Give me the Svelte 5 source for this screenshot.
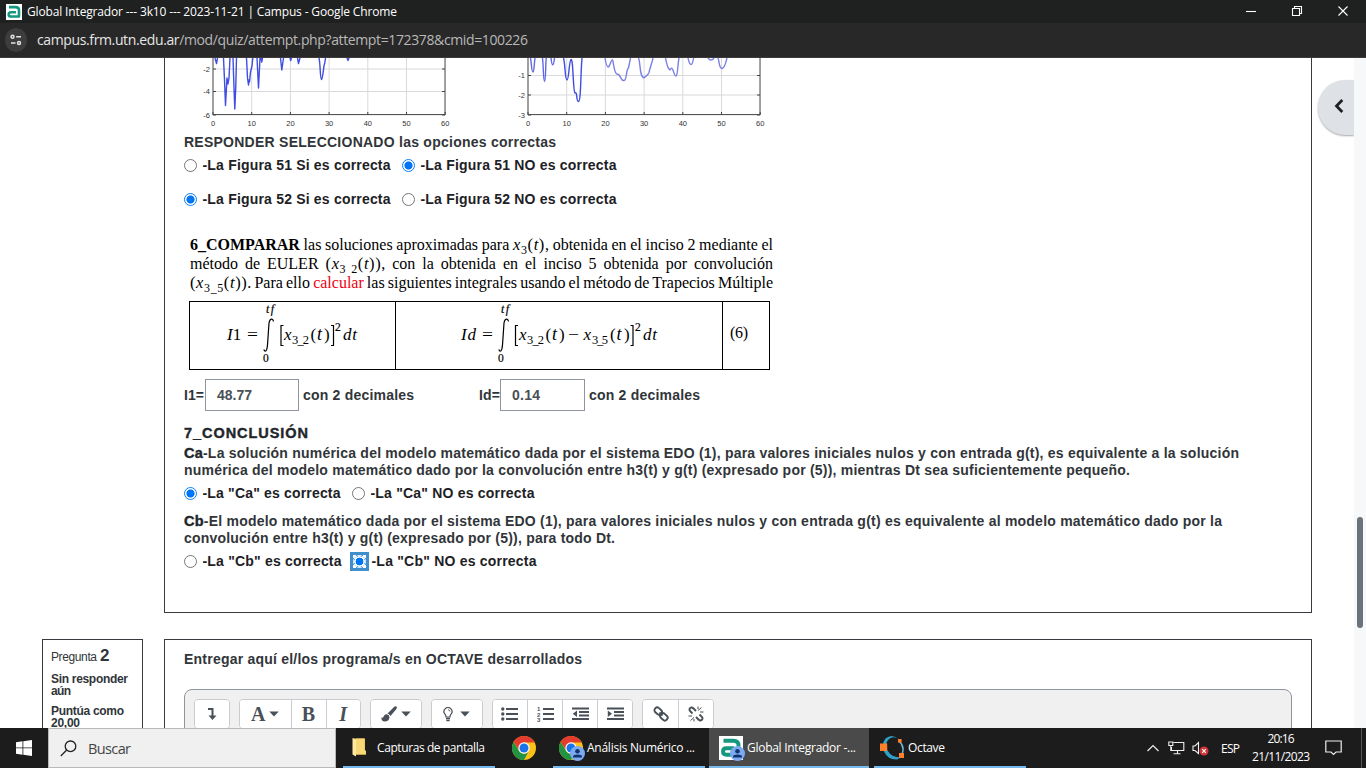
<script>
  // Spreads a line of text to a given width with letter or word spacing.
  function fit(node, opts) {
    const { w, words = false } = typeof opts === 'number' ? { w: opts } : opts;
    const natural = node.getBoundingClientRect().width;
    const text = node.textContent.trim();
    if (words) {
      const gaps = text.split(/\s+/).length - 1;
      node.style.wordSpacing = `${(w - natural) / gaps}px`;
    } else {
      const step = (w - natural) / (text.length - 1);
      node.style.letterSpacing = `${step}px`;
      node.style.marginRight = `${-step}px`;
    }
  }

  const ticks = [0, 10, 20, 30, 40, 50, 60];
  const leftY = [['-2', 11], ['-4', 33.5], ['-6', 57]];
  const rightY = [['-1', 17.5], ['-2', 37], ['-3', 57]];
</script>

{#snippet radio(on, focus = false)}
  <span class="radio" class:on class:focus></span>
{/snippet}

{#snippet logo(size)}
  <svg width={size} height={size} viewBox="0 0 24 24">
    <rect width="24" height="24" fill="#fff" />
    <path d="M4.500 4.700H14.500Q19.500 4.700 19.500 9.500V18.800H7.500Q4 18.800 4 15.600Q4 12.300 7.500 12.300H15" fill="none" stroke="#16977f" stroke-width="3.900" stroke-linejoin="round" />
  </svg>
{/snippet}

{#snippet chrome()}
  <svg width="24" height="24" viewBox="0 0 24 24">
    <circle cx="12" cy="12" r="12" fill="#fbc116" />
    <path d="M1.6 6A12 12 0 0 1 22.7 6.6H12L7 14Z" fill="#e33b2e" />
    <path d="M1.6 6L7.2 15A5.6 5.6 0 0 0 16.8 15L12 24A12 12 0 0 1 1.6 6Z" fill="#229342" />
    <circle cx="12" cy="12" r="5.7" fill="#fff" />
    <circle cx="12" cy="12" r="4.5" fill="#1a73e8" />
  </svg>
{/snippet}

{#snippet person()}
  <svg class="person" width="15" height="15" viewBox="0 0 15 15">
    <circle cx="7.5" cy="7.5" r="7.5" fill="#7baaf0" />
    <circle cx="7.5" cy="5.2" r="2.3" fill="#12336b" />
    <path d="M3 11.5V10.3Q3.5 8.4 7.5 8.4T12 10.3V11.5Z" fill="#12336b" />
  </svg>
{/snippet}

{#snippet caret()}
  <svg width="10" height="6" viewBox="0 0 10 6"><path d="M0.3 0.5H9.7L5 5.5Z" fill="#495057" /></svg>
{/snippet}

{#snippet plotFrame(x0, y)}
  <g stroke="#d9d9d9" fill="none">
    {#each ticks as t}<path d="M{x0 + t * 3.87} 0V57" />{/each}
    {#each y as row}<path d="M{x0} {row[1]}H{x0 + 232}" />{/each}
  </g>
  <path d="M{x0} 0V56.5H{x0 + 232}V0" fill="none" stroke="#555" />
  <g stroke="#444">
    {#each ticks as t}<path d="M{x0 + t * 3.87} 57v-3" />{/each}
    {#each y as row}<path d="M{x0} {row[1]}h3M{x0 + 232} {row[1]}h-3" />{/each}
  </g>
  <g class="ticktext">
    {#each ticks as t}<text x={x0 + t * 3.87} y="68" text-anchor="middle">{t}</text>{/each}
    {#each y as row}<text x={x0 - 3} y={row[1] + 2.5} text-anchor="end">{row[0]}</text>{/each}
  </g>
{/snippet}

<div class="screen">
  <header class="title">
    {@render logo(16)}
    <span use:fit={370}>Global Integrador --- 3k10 --- 2023-11-21 | Campus - Google Chrome</span>
    <svg class="controls" width="116" height="23" viewBox="0 0 116 23" fill="none" stroke="#fff" stroke-width="1.1">
      <path d="M6 11.5H16" />
      <path d="M52.5 8.5h7v7h-7zM54.5 8.5v-2h7v7h-2" />
      <path d="M98.5 6.500l9 9M107.500 6.500l-9 9" />
    </svg>
  </header>
  <div class="address">
    <span class="tune">
      <svg width="12" height="12" viewBox="0 0 12 12" fill="none" stroke="#e6e6e6" stroke-width="1.4">
        <circle cx="2.500" cy="2.800" r="1.500" /><path d="M6.200 2.800H11M1 9H5.500" /><circle cx="9" cy="9" r="1.500" />
      </svg>
    </span>
    <span class="url" use:fit={491}>campus.frm.utn.edu.ar<i>/mod/quiz/attempt.php?attempt=172378&amp;cmid=100226</i></span>
  </div>

  <main>
    <div class="content">
      <section class="card first">
        <svg class="plots" width="600" height="72" viewBox="0 0 600 72">
          {@render plotFrame(28, leftY)}
          {@render plotFrame(343, rightY)}
          <g fill="none" stroke="#3f4de0" stroke-width="1.4" stroke-linejoin="round">
            <path d="M30 0L31.500 5.500L32.500 0M38.500 0L39.500 22L40.500 47.500L42 20L43 26L44 20L45 0M48 0L49 30L49.800 51L50.800 28L51.500 0M61.500 0L62.500 20L63.500 27L64 22L64.500 24L65.500 14L67 8L67.800 0M72 0L73.500 30L75 0M76 0L76.800 4L77.500 0M95.500 0L96.800 12L98.500 0M105 0L105.700 2.500L106.500 0M112.500 0L113.500 5.500L115 0M134 0C135.500 6 135 21 136.500 21.500C138 21 138.500 7 139.800 5L140.500 0M162 0L163 2.500L164 0" />
            <path d="M345.500 0C346.500 5 346.500 14 348 14C349.300 14 349.200 4 350 0M357.500 0C358.500 8 358.300 23.500 359.500 23.500C360.800 23.500 360.500 8 361.200 0M366 0C367 9 368.500 9 369.500 0" stroke="#5f68e0" />
            <path d="M378.500 0C380.500 7 379.800 22 382 22C384 22 384 3 386 1.500C388.300 0 388 34 390 35C392.500 33 391 43.500 393.500 43.500C396 43.500 395.500 17 397 0" />
            <path d="M420 0C421 6 422 9 423 9C425 9 425.500 3 427 2C428.500 0 428.500 15 432 16C436 16 435.500 23.500 439 22.500C442 22.500 441 11 443.500 10L445.500 0M453.500 0C455.500 4 454.500 19.500 459 19.800C462 17 462.500 18 464 14.500C465.500 8 467 5 468 0M480.500 0C482 8 483 11 485 12C486.500 9 487 10 488 12C489 15 489.500 18 491 18C493 17 492.500 7 494 0M503 0C504 4 504.500 6.500 506 6.500S508 4 508.500 0M523 0Q526 4 529 0M533 0C534.500 4 534 10.500 537 10.500C540 10 540.500 5 542 0" stroke="#7b81e2" />
          </g>
        </svg>
        <p class="ask"><span use:fit={372}>RESPONDER SELECCIONADO las opciones correctas</span></p>
        <div class="options">
          <label>{@render radio(false)}<span use:fit={188}>-La Figura 51 Si es correcta</span></label>
          <label>{@render radio(true)}<span use:fit={196}>-La Figura 51 NO es correcta</span></label>
        </div>
        <div class="options second">
          <label>{@render radio(true)}<span use:fit={188}>-La Figura 52 Si es correcta</span></label>
          <label>{@render radio(false)}<span use:fit={196}>-La Figura 52 NO es correcta</span></label>
        </div>

        <div class="statement">
          <div><span use:fit={{ w: 583, words: true }}><b>6_COMPARAR</b> las soluciones aproximadas para <em><i>x</i><sub>3</sub>(<i>t</i>)</em>, obtenida en el inciso 2 mediante el</span></div>
          <div><span use:fit={{ w: 583, words: true }}>método de EULER <em>(<i>x</i><sub>3<span class="gap">2</span></sub>(<i>t</i>))</em>, con la obtenida en el inciso 5 obtenida por convolución</span></div>
          <div><span use:fit={{ w: 583, words: true }}><em>(<i>x</i><sub>3_5</sub>(<i>t</i>))</em>. Para ello <span class="red">calcular</span> las siguientes integrales usando el método de Trapecios Múltiple</span></div>
        </div>
        <div class="formulas">
          <div class="cell one">
            <svg width="205" height="67" viewBox="190 302 205 67">
              <text x="227" y="340"><tspan class="it">I</tspan>1</text>
              <text x="247" y="340" textLength="11" lengthAdjust="spacingAndGlyphs">=</text>
              <text x="266" y="313" class="it lim">tf</text>
              <path d="M273.500 321.500C273 318 269.800 318 269 323L267.500 345C267 351.500 265 352.500 263.800 349.500" />
              <text x="263" y="362" class="sm">0</text>
              <path d="M283.500 325.500H281V345.500H283.500" />
              <text x="284" y="340" class="it">x</text>
              <text x="292" y="344" class="sub" textLength="17">3_2</text>
              <text x="310.500" y="340">(</text><text x="317" y="340" class="it t">t</text><text x="324" y="340">)</text>
              <path d="M331 325.500H333.500V345.500H331" />
              <text x="335" y="331" class="sm">2</text>
              <text x="343" y="340" class="it" textLength="14">dt</text>
            </svg>
          </div>
          <div class="cell two">
            <svg width="326" height="67" viewBox="396 302 326 67">
              <text x="461" y="340" class="it" textLength="15">Id</text>
              <text x="482" y="340" textLength="11" lengthAdjust="spacingAndGlyphs">=</text>
              <text x="501" y="313" class="it lim">tf</text>
              <path d="M508.500 321.500C508 318 504.800 318 504 323L502.500 345C502 351.500 500 352.500 498.800 349.500" />
              <text x="498" y="362" class="sm">0</text>
              <path d="M518 325.500H515.500V345.500H518" />
              <text x="519" y="340" class="it">x</text>
              <text x="527" y="344" class="sub" textLength="17">3_2</text>
              <text x="545.500" y="340">(</text><text x="552" y="340" class="it t">t</text><text x="559" y="340">)</text>
              <text x="568" y="340" textLength="11" lengthAdjust="spacingAndGlyphs">−</text>
              <text x="583.500" y="340" class="it">x</text>
              <text x="592" y="344" class="sub" textLength="16">3_5</text>
              <text x="610" y="340">(</text><text x="616.500" y="340" class="it t">t</text><text x="624" y="340">)</text>
              <path d="M630.500 325.500H633V345.500H630.500" />
              <text x="635" y="331" class="sm">2</text>
              <text x="643" y="340" class="it" textLength="14">dt</text>
            </svg>
          </div>
          <div class="cell three"><span use:fit={18}>(6)</span></div>
        </div>

        <div class="answers">
          <span use:fit={20}>I1=</span><span class="field w94"><span use:fit={35}>48.77</span></span><span class="after" use:fit={111}>con 2 decimales</span>
          <span class="id" use:fit={21}>Id=</span><span class="field w85"><span use:fit={28}>0.14</span></span><span class="after" use:fit={111}>con 2 decimales</span>
        </div>

        <h4><span use:fit={124}>7_CONCLUSIÓN</span></h4>
        <p class="para">
          <span use:fit={1055}><b>Ca</b>-La solución numérica del modelo matemático dada por el sistema EDO (1), para valores iniciales nulos y con entrada g(t), es equivalente a la solución</span><br />
          <span use:fit={946}>numérica del modelo matemático dado por la convolución entre h3(t) y g(t) (expresado por (5)), mientras Dt sea suficientemente pequeño.</span>
        </p>
        <div class="options ca">
          <label>{@render radio(true)}<span use:fit={138}>-La "Ca" es correcta</span></label>
          <label>{@render radio(false)}<span use:fit={164}>-La "Ca" NO es correcta</span></label>
        </div>
        <p class="para cb">
          <span use:fit={1038}><b>Cb</b>-El modelo matemático dada por el sistema EDO (1), para valores iniciales nulos y con entrada g(t) es equivalente al modelo matemático dado por la</span><br />
          <span use:fit={431}>convolución entre h3(t) y g(t) (expresado por (5)), para todo Dt.</span>
        </p>
        <div class="options ca">
          <label>{@render radio(false)}<span use:fit={139}>-La "Cb" es correcta</span></label>
          <label>{@render radio(true, true)}<span use:fit={165}>-La "Cb" NO es correcta</span></label>
        </div>
      </section>

      <div class="question">
        <aside class="info">
          <div class="num"><span use:fit={46}>Pregunta</span> <b>2</b></div>
          <div class="state"><span use:fit={77}>Sin responder</span><br /><span use:fit={20}>aún</span></div>
          <div class="grade"><span use:fit={73}>Puntúa como</span><br /><span use:fit={29}>20,00</span></div>
        </aside>
        <section class="card next">
          <p class="deliver"><span use:fit={398}>Entregar aquí el/los programa/s en OCTAVE desarrollados</span></p>
          <div class="editor">
            <div class="group"><button style:width="34px" aria-label="expand">
              <svg width="12" height="14" viewBox="0 0 12 14"><path d="M2 2H6.500V10" fill="none" stroke="#495057" stroke-width="2" /><path d="M2.500 8.500H10.500L6.500 13Z" fill="#495057" /></svg>
            </button></div>
            <div class="group">
              <button class="serif" style:width="50.5px">A{@render caret()}</button>
              <button class="serif" style:width="35px">B</button>
              <button class="serif ital" style:width="34.5px">I</button>
            </div>
            <div class="group"><button style:width="49.5px" aria-label="color">
              <svg width="16" height="16" viewBox="0 0 16 16" fill="#495057"><path d="M15.500 .5Q16.500 1.500 15 3.500L9.500 10Q8.500 8 6.500 7.500L13 1Q14.500 0 15.500 .5Z" /><path d="M5.800 8.300Q8.500 9 8.500 11.200Q8 15.500 3.500 15.500Q.6 15.500 .2 11.500Q2 12.500 2.600 10.500Q3.800 8 5.800 8.300Z" /></svg>{@render caret()}
            </button></div>
            <div class="group"><button style:width="50px" class="bulb" aria-label="idea">
              <svg width="10" height="15" viewBox="0 0 10 15" fill="none" stroke="#495057" stroke-width="1.200"><path d="M3 10Q3 8 1.800 7A4 4 0 1 1 8.200 7Q7 8 7 10Z" /><path d="M5 2.700Q6.800 2.700 7 4.500" stroke-width=".8" /><path d="M3 11.500H7M3.300 13.500H6.700" stroke-width="1.500" /></svg>{@render caret()}
            </button></div>
            <div class="group lists">
              <button aria-label="bullets"><svg width="17" height="14" viewBox="0 0 17 14" fill="#495057"><circle cx="1.800" cy="2" r="1.700" /><circle cx="1.800" cy="7" r="1.700" /><circle cx="1.800" cy="12" r="1.700" /><path d="M5 1H17V3H5zM5 6H17V8H5zM5 11H17V13H5z" /></svg></button>
              <button aria-label="numbers"><svg width="17" height="16" viewBox="0 0 17 16" fill="#495057"><path d="M6 2H17V4H6zM6 7H17V9H6zM6 12H17V14H6z" /><g class="nums"><text x="0" y="5">1</text><text x="0" y="10.500">2</text><text x="0" y="16">3</text></g></svg></button>
              <button aria-label="outdent"><svg width="17" height="14" viewBox="0 0 17 14" fill="#495057"><path d="M0 .5H17V2.500H0zM7 4H17V6H7zM7 7.500H17V9.500H7zM0 11H17V13H0zM5 3.500V10L.8 6.800Z" /></svg></button>
              <button aria-label="indent"><svg width="17" height="14" viewBox="0 0 17 14" fill="#495057"><path d="M0 .5H17V2.500H0zM7 4H17V6H7zM7 7.500H17V9.500H7zM0 11H17V13H0zM.8 3.500V10L5 6.800Z" /></svg></button>
            </div>
            <div class="group lists">
              <button aria-label="link"><svg width="16" height="16" viewBox="0 0 16 16" fill="none" stroke="#495057" stroke-width="1.900"><rect x="1.200" y="2.200" width="8" height="5.500" rx="2.600" transform="rotate(42 5 5)" /><rect x="6.800" y="8.200" width="8" height="5.500" rx="2.600" transform="rotate(42 11 11)" /><path d="M6.500 6.500L9.500 9.500" /></svg></button>
              <button aria-label="unlink"><svg width="16" height="16" viewBox="0 0 16 16" fill="none" stroke="#495057" stroke-width="1.900"><path d="M4.500 7.500L2 5Q.8 3 2.500 1.800Q4 1 5.500 2.500L8 5M11.500 8.500L14 11Q15.200 13 13.500 14.200Q12 15 10.500 13.500L8 11" /><path d="M10 4.500L13.500 1.500M10 .5V3M12 6H15.500M2.500 14.500L6 11.500M6 13V15.500M.5 10H4" stroke-width="1" /></svg></button>
            </div>
          </div>
        </section>
      </div>
    </div>
    <div class="track"><div class="thumb"></div></div>
    <div class="drawer"><svg width="10" height="14" viewBox="0 0 10 14"><path d="M8.300 1L2.500 7L8.300 13" fill="none" stroke="#1d2125" stroke-width="2.800" /></svg></div>
  </main>

  <footer>
    <div class="start"><svg width="16" height="16" viewBox="0 0 16 16" fill="#fff"><path d="M0 2.200L6.500 1.300V7.500H0zM7.300 1.200L16 0V7.500H7.300zM0 8.300H6.500V14.700L0 13.800zM7.300 8.300H16V16L7.300 14.800z" /></svg></div>
    <div class="search">
      <svg width="17" height="17" viewBox="0 0 17 17" fill="none" stroke="#222" stroke-width="1.300"><circle cx="10.500" cy="6.300" r="5.300" /><path d="M6.700 10L.8 16" /></svg>
      <span use:fit={43}>Buscar</span>
    </div>
    <div class="task folder">
      <svg width="16" height="20" viewBox="0 0 16 20"><path d="M2 1.500H14V14L15 15V17.500H2Z" fill="#e9b94c" /><path d="M1.500 1L5 2.500V19.500L1.500 17.500Z" fill="#ffe9a0" /><path d="M5 1.500H13.500V13.500H15V17.500H5Z" fill="#f8d775" /></svg>
      <span use:fit={108}>Capturas de pantalla</span>
    </div>
    <div class="pin">{@render chrome()}</div>
    <div class="task analisis"><span class="app">{@render chrome()}{@render person()}</span><span use:fit={108}>Análisis Numérico ...</span></div>
    <div class="task global"><span class="app">{@render logo(24)}{@render person()}</span><span use:fit={109}>Global Integrador -...</span></div>
    <div class="task octave">
      <svg width="24" height="25" viewBox="0 0 24 25"><path d="M19.500 4.500Q12 -2 5.500 3.500Q1 9 4 16.500Q8 25 17 24.500L21 22.500Q11.500 22.500 7.500 15.500Q4.500 8 9 4Q13.500 .5 19.500 4.500Z" fill="#2fa0c8" /><path d="M19.500 6.500Q25.500 12.500 21.500 20" fill="none" stroke="#6fb6d2" stroke-width="1.500" /><rect y="8.500" width="7.200" height="7.500" fill="#ff7f2a" /><rect x="18" y="4" width="3.600" height="3.600" fill="#ff7f2a" /><rect x="19" y="18" width="5" height="5" fill="#ff7f2a" /></svg>
      <span use:fit={37}>Octave</span>
    </div>
    <div class="tray">
      <svg width="12" height="8" viewBox="0 0 12 8" fill="none" stroke="#eee" stroke-width="1.200"><path d="M.5 7L6 1.500L11.500 7" /></svg>
      <svg class="net" width="17" height="14" viewBox="0 0 17 14" fill="none" stroke="#eee" stroke-width="1.100"><path d="M5.500 1.500H15.800V9.500H3.500V6M9.500 9.500V12.500M5.500 12.800H12.500M.8 1H4.800V4.500H.8zM2.800 4.500V9.500H4" /></svg>
      <svg class="vol" width="17" height="15" viewBox="0 0 17 15"><path d="M1 5H3L6.500 1.500V12.500L3 9.500H1Z" fill="none" stroke="#eee" stroke-width="1.100" /><circle cx="12" cy="10" r="4.500" fill="#d13438" /><path d="M10.200 8.200L13.800 11.800M13.800 8.200L10.200 11.800" stroke="#fff" stroke-width="1.200" /></svg>
      <span class="lang"><span use:fit={19}>ESP</span></span>
      <div class="clock"><span use:fit={27}>20:16</span><span use:fit={58}>21/11/2023</span></div>
      <svg class="note" width="17" height="16" viewBox="0 0 17 16" fill="none" stroke="#eee" stroke-width="1.200"><path d="M.8 1H16.200V12H11L8.500 14.500L6 12H.8Z" /></svg>
      <span class="peek"></span>
    </div>
  </footer>
</div>

<style>
  :global(body) { background: #fff; overflow: hidden; }
  :global(*) { box-sizing: border-box; }
  svg { display: block; flex: none; }
  p, h4 { margin: 0; }
  .screen { width: 1366px; height: 768px; display: flex; flex-direction: column; overflow: hidden; font-family: "Liberation Sans", Arial, sans-serif; white-space: nowrap; }
  .screen span { flex: none; }
  .title { height: 23px; flex: none; display: flex; align-items: center; gap: 5px; padding-left: 6px; background: #1f2121; color: #fff; font: 12px "Open Sans", sans-serif; }
  .controls { margin-left: auto; margin-right: 10px; }
  .address { height: 35px; flex: none; display: flex; align-items: center; padding-left: 5px; gap: 10px; background: #282828; border-bottom: 1px solid #3e3a3a; font: 14px "Open Sans", sans-serif; color: #e6e6e6; }
  .tune { width: 22px; height: 24px; border-radius: 50%; background: #3d3d3d; display: flex; align-items: center; justify-content: center; }
  .url { margin-top: -1px; }
  .url i { font-style: normal; color: #b8b8b8; }

  main { height: 670px; flex: none; display: flex; position: relative; overflow: hidden; background: #fff; }
  .content { width: 1354px; padding-left: 42px; }
  .card { border: 1px solid #373a3e; color: #313539; font-size: 14px; font-weight: bold; }
  .first { height: 555px; margin-left: 122px; width: 1148px; border-top: 0; padding-left: 19px; display: flex; flex-direction: column; }
  .plots { margin-left: 1px; }
  .ticktext { font: 7.5px "Liberation Sans", sans-serif; fill: #333; }
  .ask { height: 24px; line-height: 25px; }
  .options { height: 22px; display: flex; align-items: center; gap: 11.500px; color: #1d2125; }
  .options label { display: flex; align-items: center; gap: 5.500px; }
  .second { margin-top: 12px; }
  .radio { width: 13px; height: 13px; border-radius: 50%; border: 1px solid #767676; display: block; background: #fff; }
  .radio.on { border-color: #0b7ff5; background: radial-gradient(circle, #0075f5 3.700px, #fff 4.400px); }
  .radio.focus { position: relative; border-color: transparent; background: none; isolation: isolate; }
  .radio.focus::before { content: ""; position: absolute; inset: -4px; z-index: -1; border: 3px solid #3f8fcc; background: conic-gradient(#3f8fcc 0 0) center / 7px 100% no-repeat, conic-gradient(#3f8fcc 0 0) center / 100% 7px no-repeat, #fff; }
  .radio.focus::after { content: ""; position: absolute; inset: -1px; border-radius: 50%; border: 1px solid #fff; background: radial-gradient(circle, #0075f5 3.600px, #fff 4.200px 5px, #0b7ff5 5.400px); }

  .statement { margin: 25px 0 0 6px; height: 57px; font: 16px/20px "Liberation Serif", serif; color: #000; }
  .statement div { height: 19px; }
  .statement em { font-style: normal; letter-spacing: 0.600px; font-size: 16.500px; line-height: 0; }
  .statement sub { font-size: 12px; line-height: 0; vertical-align: -4px; }
  .gap { padding-left: 5px; }
  .red { color: #f00012; }
  .formulas { margin: 9px 0 0 5px; width: 581px; height: 69px; display: flex; border: 1px solid #000; font: 16px "Liberation Serif", serif; color: #000; }
  .cell + .cell { border-left: 1px solid #000; }
  .one { width: 205px; }
  .two { width: 327px; }
  .three { flex: 1; display: flex; justify-content: flex-start; padding: 22px 0 0 7px; }
  .formulas svg { font: 17px "Liberation Serif", serif; }
  .formulas path { fill: none; stroke: #000; stroke-width: 1.200; }
  .formulas .it { font-style: italic; }
  .formulas .t { font-size: 18px; }
  .formulas .lim { font-size: 12px; letter-spacing: 1.500px; stroke: #000; stroke-width: .2px; }
  .formulas .sm { font-size: 11.500px; stroke: #000; stroke-width: .2px; }
  .formulas .sub { font-size: 12.500px; }

  .answers { margin-top: 9px; height: 32px; display: flex; align-items: center; }
  .field { height: 32px; border: 1px solid #8f959e; display: flex; align-items: center; padding-left: 11px; color: #495057; margin-left: 1px; }
  .w94 { width: 94px; }
  .w85 { width: 85px; }
  .after { margin-left: 4px; }
  .id { margin-left: 65px; }
  .id + .field { margin-left: 0; }
  h4 { margin-top: 13px; height: 18px; line-height: 19px; font-size: 14.500px; color: #22262a; -webkit-text-stroke: .4px #22262a; }
  .para { margin-top: 3px; height: 34px; line-height: 17px; }
  .para b { color: #22262a; -webkit-text-stroke: .4px #22262a; font-size: 14.500px; line-height: 0; }
  .ca { margin-top: 3px; }
  .cb { margin-top: 9px; }

  .question { margin-top: 26px; display: flex; align-items: flex-start; gap: 21px; }
  .info { width: 101px; height: 110px; border: 1px solid #373a3e; padding: 6px 0 0 8px; font-size: 12px; line-height: 12px; color: #313539; }
  .num { height: 20px; line-height: 20px; display: flex; align-items: baseline; gap: 3px; }
  .num b { font-size: 17px; }
  .num span { font-size: 12px; }
  .state, .grade { font-weight: bold; margin-top: 7px; }
  .grade { margin-top: 8px; line-height: 12px; }
  .next { width: 1148px; height: 110px; padding: 9px 19px 0; }
  .deliver { height: 22px; line-height: 21px; }
  .editor { margin-top: 18px; height: 80px; border: 1px solid #8f959e; border-radius: 8px; background: #f0f0f0; display: flex; align-items: flex-start; gap: 9px; padding: 9px; }
  .group { display: flex; height: 30px; border: 1px solid #c9ccd0; border-radius: 4px; background: #fff; overflow: hidden; }
  .group button { display: flex; align-items: center; justify-content: center; gap: 4px; border: 0; padding: 0; background: #fff; color: #495057; }
  .group button + button { border-left: 1px solid #c9ccd0; }
  .lists button { width: 34.900px; }
  .group .serif { font: bold 20px "Liberation Serif", serif; }
  .group .ital { font-style: italic; }
  .group .bulb { gap: 7px; }
  .nums { font: bold 6px "Liberation Sans", sans-serif; }
  .track { width: 12px; background: #f6f8fa; display: flex; justify-content: center; padding-top: 459px; }
  .thumb { width: 6px; height: 111px; border-radius: 3px; background: #6a737b; }
  .drawer { position: absolute; left: 1318px; top: 22px; width: 36px; height: 55px; border-radius: 28px 0 0 28px; background: #dee2e6; box-shadow: 0 1px 2px rgba(0, 0, 0, .35); display: flex; align-items: center; padding-left: 16px; clip-path: inset(-4px 0 -4px -4px); }
  .drawer svg { margin-top: -3px; }

  footer { height: 40px; flex: none; display: flex; background: #1c1c1c; color: #fff; font: 12px "Open Sans", sans-serif; }
  .start { width: 48px; display: flex; align-items: center; justify-content: center; }
  .search { width: 288px; border: 1px solid #b9b9b9; background: #f0f0f0; display: flex; align-items: center; gap: 11px; padding-left: 11px; font-size: 14.500px; color: #444; }
  .task { width: 152px; border-bottom: 2px solid #76b9ed; display: flex; align-items: center; }
  .folder { margin-left: 7px; padding-left: 8px; gap: 10px; }
  .pin { width: 58px; display: flex; align-items: center; justify-content: center; }
  .app { position: relative; top: 1px; }
  .person { position: absolute; left: 11px; top: 10px; }
  .analisis { padding-left: 6px; gap: 4px; }
  .global { margin-left: 4px; width: 160px; background: #4a4a4a; padding-left: 10px; gap: 4px; }
  .octave { margin-left: 5px; padding-left: 6px; gap: 4px; }
  .tray { margin-left: 121px; flex: 1; display: flex; align-items: center; }
  .net { margin-left: 9px; }
  .vol { margin-left: 7px; }
  .lang { margin-left: 12px; }
  .clock { margin-left: 12px; width: 58px; display: flex; flex-direction: column; align-items: center; line-height: 18px; }
  .note { margin-left: 15px; }
  .peek { margin-left: auto; margin-right: 4px; width: 1px; height: 40px; background: #555; }
</style>
